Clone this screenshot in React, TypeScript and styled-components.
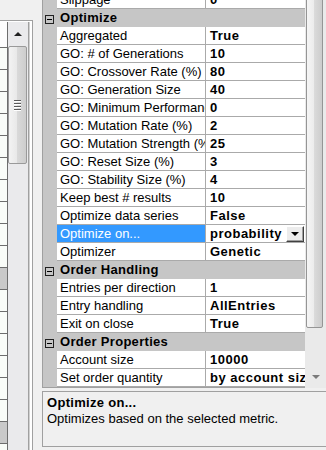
import React from "react";
import styled, { createGlobalStyle } from "styled-components";

const GlobalStyle = createGlobalStyle`
  html, body { margin: 0; padding: 0; background: #f0f0f0; }
  body { font-family: "Liberation Sans", Arial, sans-serif; font-size: 13px; color: #000; }
  #root { width: 326px; height: 450px; overflow: hidden; }
`;

type Prop = { label: string; value: string; selected?: boolean; dropdown?: boolean };
type Section = { title: string; items: Prop[] };

const leading: Prop[] = [{ label: "Slippage", value: "0" }];

const sections: Section[] = [
  {
    title: "Optimize",
    items: [
      { label: "Aggregated", value: "True" },
      { label: "GO: # of Generations", value: "10" },
      { label: "GO: Crossover Rate (%)", value: "80" },
      { label: "GO: Generation Size", value: "40" },
      { label: "GO: Minimum Performance", value: "0" },
      { label: "GO: Mutation Rate (%)", value: "2" },
      { label: "GO: Mutation Strength (%)", value: "25" },
      { label: "GO: Reset Size (%)", value: "3" },
      { label: "GO: Stability Size (%)", value: "4" },
      { label: "Keep best # results", value: "10" },
      { label: "Optimize data series", value: "False" },
      { label: "Optimize on...", value: "probability", selected: true, dropdown: true },
      { label: "Optimizer", value: "Genetic" },
    ],
  },
  {
    title: "Order Handling",
    items: [
      { label: "Entries per direction", value: "1" },
      { label: "Entry handling", value: "AllEntries" },
      { label: "Exit on close", value: "True" },
    ],
  },
  {
    title: "Order Properties",
    items: [
      { label: "Account size", value: "10000" },
      { label: "Set order quantity", value: "by account size" },
    ],
  },
];

const listCells = Array.from({ length: 19 }, (_, i) => i === 10 || i === 17);

/* ---------- window ---------- */

const Window = styled.div`
  width: 326px;
  height: 450px;
  display: flex;
  background: #f0f0f0;
  overflow: hidden;
`;

/* ---------- left list fragment ---------- */

const LeftPane = styled.div`
  width: 42px;
  flex: none;
  display: flex;
  flex-direction: column;
  padding-top: 20px;
  box-sizing: border-box;
`;

const ListFrame = styled.div`
  flex: 1;
  margin-right: 9px;
  border-top: 1px solid #a0a0a0;
  border-right: 1px solid #a0a0a0;
  padding-top: 1px;
  background: #fff;
  display: flex;
  min-height: 0;
`;

const CellColumn = styled.div`
  width: 7px;
  flex: none;
  border-right: 1px solid #6d6d6d;
  display: flex;
  flex-direction: column;
  overflow: hidden;
`;

const HeadCell = styled.div`
  height: 25px;
  flex: none;
  background: #fdfdfd;
  border-bottom: 1px solid #6d6d6d;
`;

const ListCell = styled.div<{ $gray: boolean }>`
  height: 21px;
  flex: none;
  background: ${(p) => (p.$gray ? "#c9c9c9" : "#f9fcf8")};
  border-bottom: 1px solid #6d6d6d;
`;

const LeftScroll = styled.div`
  width: 20px;
  flex: none;
  display: flex;
  flex-direction: column;
  background: #eaeaec;
`;

const ScrollButton = styled.div<{ $h: number }>`
  height: ${(p) => p.$h}px;
  flex: none;
  display: flex;
  align-items: center;
  justify-content: center;
`;

const ArrowUp = styled.div<{ $color: string }>`
  width: 0;
  height: 0;
  border-left: 4px solid transparent;
  border-right: 4px solid transparent;
  border-bottom: 4px solid ${(p) => p.$color};
`;

const ArrowDown = styled.div<{ $color: string }>`
  width: 0;
  height: 0;
  border-left: 4px solid transparent;
  border-right: 4px solid transparent;
  border-top: 4px solid ${(p) => p.$color};
`;

const LeftThumb = styled.div`
  height: 118px;
  flex: none;
  margin-right: 1px;
  box-sizing: border-box;
  border: 1px solid #9a9a9a;
  border-radius: 2px;
  background: linear-gradient(to right, #f3f3f3 0%, #e9e9e9 45%, #d9d9d9 50%, #cdcdcd 100%);
  display: flex;
  flex-direction: column;
  align-items: center;
  justify-content: center;
  gap: 2px;
`;

const Grip = styled.div`
  width: 7px;
  height: 1px;
  background: #5a5a5a;
  box-shadow: 0 1px 0 #ffffff;
`;

const FrameEdge = styled.div`
  width: 4px;
  flex: none;
  background: linear-gradient(to right, #a0a0a0 0 1px, #d0d0d0 1px 2px, #ffffff 2px 4px);
`;

/* ---------- property grid ---------- */

const RightPane = styled.div`
  flex: 1;
  display: flex;
  flex-direction: column;
  min-width: 0;
`;

const GridArea = styled.div`
  height: 388px;
  flex: none;
  display: flex;
`;

const Grid = styled.div`
  width: 263px;
  flex: none;
  box-sizing: border-box;
  border-left: 1px solid #a0a0a0;
  border-bottom: 1px solid #a0a0a0;
  background: #c6c6c6;
  overflow: hidden;
`;

const Rows = styled.div`
  margin-top: -9px;
  display: flex;
  flex-direction: column;
`;

const Row = styled.div`
  display: grid;
  grid-template-columns: 14px 149px 99px;
  height: 18px;
`;

const Margin = styled.div`
  background: #c6c6c6;
`;

const LabelCell = styled.div<{ $selected: boolean }>`
  box-sizing: border-box;
  padding-left: 3px;
  line-height: 17px;
  white-space: nowrap;
  overflow: hidden;
  background: ${(p) => (p.$selected ? "#3399ff" : "#ffffff")};
  color: ${(p) => (p.$selected ? "#ffffff" : "#000000")};
  border-right: 1px solid #aaaaaa;
  border-bottom: 1px solid #aaaaaa;
`;

const ValueCell = styled.div`
  position: relative;
  box-sizing: border-box;
  padding-left: 4px;
  line-height: 17px;
  white-space: nowrap;
  overflow: hidden;
  background: #ffffff;
  font-weight: bold;
  letter-spacing: 0.5px;
  border-bottom: 1px solid #aaaaaa;
`;

const DropButton = styled.div`
  position: absolute;
  right: 1px;
  top: 1px;
  width: 18px;
  height: 16px;
  box-sizing: border-box;
  background: #ececec;
  border: 1px solid;
  border-color: #ffffff #404040 #404040 #ffffff;
  box-shadow: inset -1px -1px 0 #a0a0a0;
  display: flex;
  align-items: center;
  justify-content: center;
`;

const CategoryRow = styled.div`
  display: grid;
  grid-template-columns: 14px 1fr;
  height: 18px;
  background: #c6c6c6;
`;

const ToggleSlot = styled.div`
  padding: 6px 0 0 2px;
`;

const ToggleBox = styled.div`
  width: 9px;
  height: 9px;
  box-sizing: border-box;
  border: 1px solid #202020;
  display: flex;
  align-items: center;
  justify-content: center;
`;

const Minus = styled.div`
  width: 5px;
  height: 1px;
  background: #000;
`;

const CategoryTitle = styled.div`
  padding-left: 3px;
  line-height: 18px;
  font-weight: bold;
  letter-spacing: 0.3px;
  white-space: nowrap;
  overflow: hidden;
`;

const GridScroll = styled.div`
  flex: 1;
  display: flex;
  flex-direction: column;
  background: #eaeaea;
  overflow: hidden;
`;

const GridThumb = styled.div`
  height: 338px;
  margin-top: -10px;
  flex: none;
  margin-left: 1px;
  width: 17px;
  box-sizing: border-box;
  border: 1px solid #959595;
  border-radius: 2px;
  background: linear-gradient(to right, #f5f5f5 0%, #ececec 45%, #dadada 50%, #cccccc 100%);
`;

const ScrollGap = styled.div`
  flex: 1;
`;

/* ---------- help panel ---------- */

const HelpPanel = styled.div`
  height: 56px;
  flex: none;
  margin: 3px -4px 0 0;
  box-sizing: border-box;
  border: 1px solid #a0a0a0;
  background: #f0f0f0;
  padding: 3px 0 0 4px;
`;

const HelpTitle = styled.div`
  font-weight: bold;
  letter-spacing: 0.3px;
  line-height: 16px;
`;

const HelpText = styled.div`
  line-height: 16px;
`;

const PropRow: React.FC<{ p: Prop }> = ({ p }) => (
  <Row>
    <Margin />
    <LabelCell $selected={!!p.selected}>{p.label}</LabelCell>
    <ValueCell>
      {p.value}
      {p.dropdown && (
        <DropButton>
          <ArrowDown $color="#000" />
        </DropButton>
      )}
    </ValueCell>
  </Row>
);

export default function App() {
  return (
    <>
      <GlobalStyle />
      <Window>
        <LeftPane>
          <ListFrame>
            <CellColumn>
              <HeadCell />
              {listCells.map((g, i) => (
                <ListCell key={i} $gray={g} />
              ))}
            </CellColumn>
            <LeftScroll>
              <ScrollButton $h={24}>
                <ArrowUp $color="#202020" />
              </ScrollButton>
              <LeftThumb>
                <Grip />
                <Grip />
                <Grip />
                <Grip />
              </LeftThumb>
            </LeftScroll>
            <FrameEdge />
          </ListFrame>
        </LeftPane>
        <RightPane>
          <GridArea>
            <Grid>
              <Rows>
                {leading.map((p) => (
                  <PropRow key={p.label} p={p} />
                ))}
                {sections.map((s) => (
                  <React.Fragment key={s.title}>
                    <CategoryRow>
                      <ToggleSlot>
                        <ToggleBox>
                          <Minus />
                        </ToggleBox>
                      </ToggleSlot>
                      <CategoryTitle>{s.title}</CategoryTitle>
                    </CategoryRow>
                    {s.items.map((p) => (
                      <PropRow key={p.label} p={p} />
                    ))}
                  </React.Fragment>
                ))}
              </Rows>
            </Grid>
            <GridScroll>
              <GridThumb />
              <ScrollGap />
              <ScrollButton $h={22}>
                <ArrowDown $color="#7a7a7a" />
              </ScrollButton>
            </GridScroll>
          </GridArea>
          <HelpPanel>
            <HelpTitle>Optimize on...</HelpTitle>
            <HelpText>Optimizes based on the selected metric.</HelpText>
          </HelpPanel>
        </RightPane>
      </Window>
    </>
  );
}
